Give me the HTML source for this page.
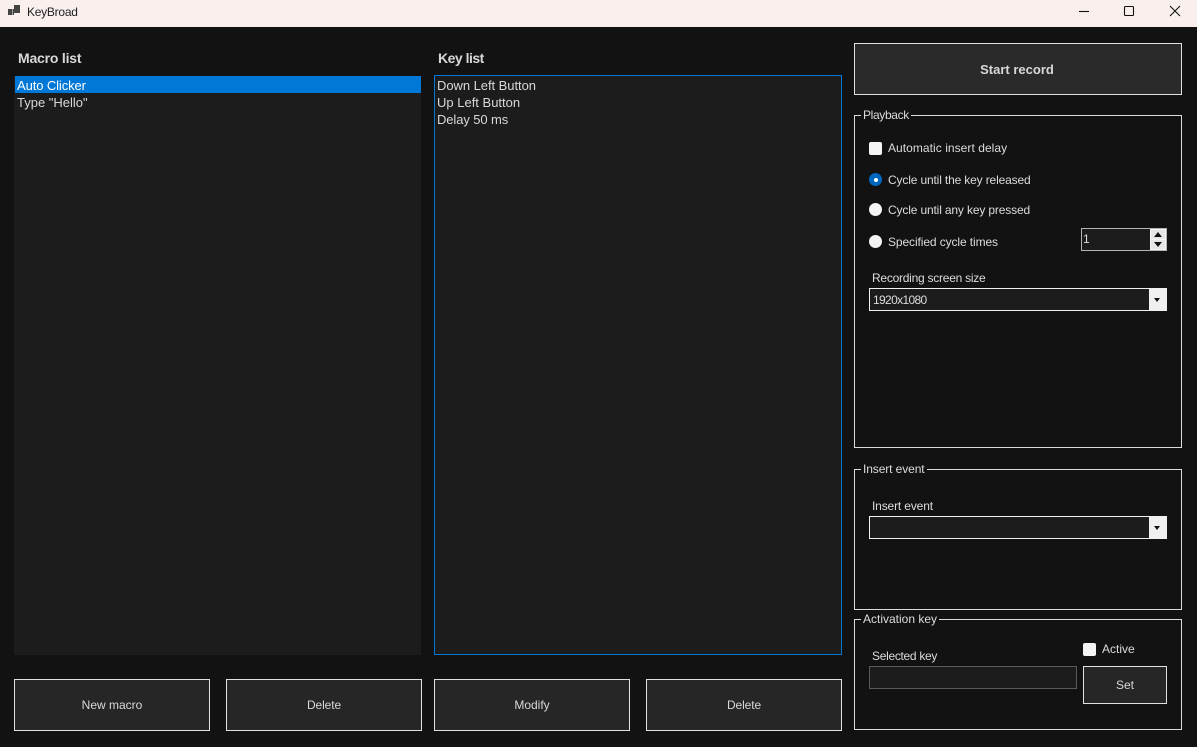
<!DOCTYPE html>
<html><head><meta charset="utf-8"><title>KeyBroad</title>
<style>
html,body{margin:0;padding:0;width:1197px;height:747px;overflow:hidden;background:#121212}
body{position:relative;font-family:"Liberation Sans",sans-serif;font-size:12px;color:#dcdcdc}
div,span.t{position:absolute;box-sizing:border-box}
.t{white-space:nowrap;line-height:16px;height:16px}
.btn{background:#262626;border:1px solid #e0e0e0;text-align:center;line-height:50px;font-size:12px;color:#d8d8d8}
.grp{border:1px solid #dcdcdc}
.leg{background:#121212;padding:0 2px;height:14px;line-height:14px;font-weight:normal;white-space:nowrap;color:#dcdcdc;font-size:12px}
.cb{width:13px;height:13px;background:#f4f4f4;border-radius:2px}
.rb{width:13px;height:13px;background:#f4f4f4;border-radius:50%}
.combo{background:#1c1c1c;border:1px solid #f0f0f0;height:23px;width:298px}
.arrow{right:0;top:0;width:17px;height:21px;background:#f0f0f0}
.tri{width:0;height:0;border-left:3.5px solid transparent;border-right:3.5px solid transparent;border-top:4px solid #111}
.li{font-size:13px;left:3px;height:17px;line-height:17px;white-space:nowrap;color:#d8d8d8}
</style></head><body>
<div style="left:0;top:0;width:1197px;height:27px;background:#f9f0ee"></div>
<svg style="position:absolute;left:8px;top:5px" width="13" height="11"><rect x="0" y="4" width="4" height="6" fill="#444"/><rect x="6" y="0" width="6" height="8" fill="#444"/><rect x="4.5" y="4" width="1.5" height="6" fill="#444"/></svg>
<span class="t" style="left:27px;top:4px;color:#222;letter-spacing:-.25px">KeyBroad</span>
<svg style="position:absolute;left:1075px;top:2px" width="115" height="20" fill="none" stroke="#111" stroke-width="1.1"><path d="M4 9.5H14"/><rect x="49.5" y="4.5" width="9" height="9" rx="1"/><path d="M95 4L105 14M105 4L95 14"/></svg>

<span class="t" style="left:18px;top:50px;font-size:14px;font-weight:bold;color:#d8d8d8;letter-spacing:-.2px">Macro list</span>
<span class="t" style="left:438px;top:50px;font-size:14px;font-weight:bold;color:#d8d8d8;letter-spacing:-.5px">Key list</span>

<div style="left:14px;top:76px;width:407px;height:579px;background:#1c1c1c">
<div style="left:1px;top:0;width:406px;height:17px;background:#0078d7"></div>
<div class="li" style="top:1px;color:#fff;letter-spacing:-.1px">Auto Clicker</div>
<div class="li" style="top:18px">Type "Hello"</div>
</div>
<div style="left:434px;top:75px;width:408px;height:580px;background:#1c1c1c;border:1px solid #0078d7">
<div class="li" style="left:2px;top:1px;letter-spacing:-.05px">Down Left Button</div>
<div class="li" style="left:2px;top:18px">Up Left Button</div>
<div class="li" style="left:2px;top:35px;letter-spacing:-.1px">Delay 50 ms</div>
</div>

<div class="btn" style="left:14px;top:679px;width:196px;height:52px">New macro</div>
<div class="btn" style="left:226px;top:679px;width:196px;height:52px;letter-spacing:-.1px">Delete</div>
<div class="btn" style="left:434px;top:679px;width:196px;height:52px">Modify</div>
<div class="btn" style="left:646px;top:679px;width:196px;height:52px;letter-spacing:-.1px">Delete</div>
<div class="btn" style="left:854px;top:43px;width:328px;height:52px;background:#2a2a2a;font-size:13px;font-weight:bold;color:#d8d8d8;line-height:52px;padding-right:2px">Start record</div>

<div class="grp" style="left:854px;top:115px;width:328px;height:333px"></div>
<div class="leg" style="left:861px;top:108px;letter-spacing:-.35px">Playback</div>
<div class="cb" style="left:869px;top:142px"></div>
<span class="t" style="left:888px;top:140px;letter-spacing:.05px">Automatic insert delay</span>
<div class="rb" style="left:869px;top:173px;background:#0067c0"></div>
<div style="left:873.5px;top:177.5px;width:4px;height:4px;border-radius:50%;background:#fff"></div>
<span class="t" style="left:888px;top:172px;letter-spacing:-.15px">Cycle until the key released</span>
<div class="rb" style="left:869px;top:203px"></div>
<span class="t" style="left:888px;top:202px;letter-spacing:-.15px">Cycle until any key pressed</span>
<div class="rb" style="left:869px;top:235px"></div>
<span class="t" style="left:888px;top:234px;letter-spacing:-.1px">Specified cycle times</span>
<div style="left:1081px;top:228px;width:86px;height:23px;background:#1c1c1c;border:1px solid #b4b4b4">
<span class="t" style="left:1px;top:2px">1</span>
<div style="left:68px;top:0;width:16px;height:21px;background:#f4f4f4">
<div style="left:1px;top:1px;width:14px;height:9px;background:#e6e6e6"></div>
<div style="left:1px;top:11px;width:14px;height:9px;background:#e6e6e6"></div>
<div class="tri" style="left:4px;top:3px;border-top:0;border-bottom:5px solid #111;border-left-width:4px;border-right-width:4px"></div>
<div class="tri" style="left:4px;top:13px;border-top-width:5px;border-left-width:4px;border-right-width:4px"></div>
</div></div>
<span class="t" style="left:872px;top:270px;letter-spacing:-.25px">Recording screen size</span>
<div class="combo" style="left:869px;top:288px"><span class="t" style="left:3px;top:3px;letter-spacing:-.65px">1920x1080</span><div class="arrow"><div class="tri" style="left:5px;top:9px"></div></div></div>

<div class="grp" style="left:854px;top:469px;width:328px;height:141px"></div>
<div class="leg" style="left:861px;top:462px;letter-spacing:-.1px">Insert event</div>
<span class="t" style="left:872px;top:498px;letter-spacing:-.15px">Insert event</span>
<div class="combo" style="left:869px;top:516px"><div class="arrow"><div class="tri" style="left:5px;top:9px"></div></div></div>

<div class="grp" style="left:854px;top:619px;width:328px;height:111px"></div>
<div class="leg" style="left:861px;top:612px">Activation key</div>
<span class="t" style="left:872px;top:648px;letter-spacing:-.3px">Selected key</span>
<div style="left:869px;top:666px;width:208px;height:23px;background:#1c1c1c;border:1px solid #5a5a5a"></div>
<div class="cb" style="left:1083px;top:643px"></div>
<span class="t" style="left:1102px;top:641px">Active</span>
<div class="btn" style="left:1083px;top:666px;width:84px;height:38px;line-height:36px">Set</div>
</body></html>
